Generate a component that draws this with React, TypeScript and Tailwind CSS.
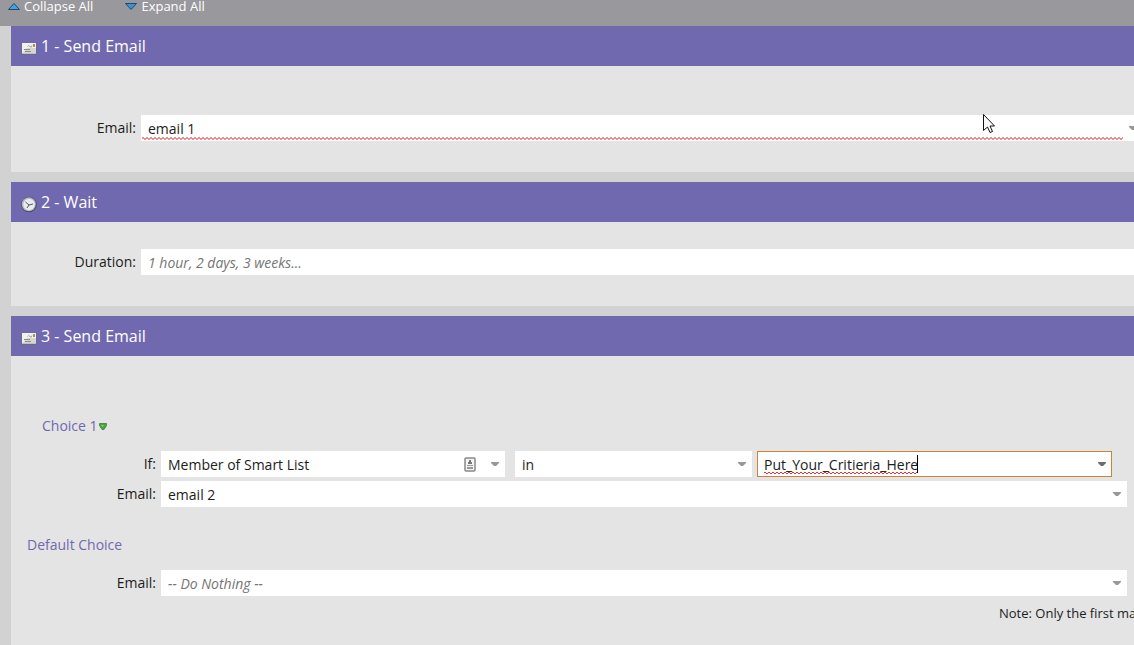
import type { ReactNode } from 'react';

const MailIcon = () => (
    <svg width="16" height="13" viewBox="0 0 16 13" className="shrink-0" aria-hidden="true">
        <rect x="0.5" y="1" width="15" height="11.5" rx="0.5" fill="#6b6878" />
        <rect x="1" y="1" width="14" height="10.500" fill="#f1f1ec" />
        <path d="M1 11.500L6 6h9v5.500z" fill="#d6d6d2" />
        <rect x="12" y="2" width="2" height="3" fill="#a8964c" />
        <path d="M6.500 4.500q1-2 2.500 0t2-1" fill="none" stroke="#a2a2a2" />
        <path d="M3 7.500h6M4 9.500h6" stroke="#8c8c8c" />
    </svg>
);

const ClockIcon = () => (
    <svg width="16" height="17" viewBox="0 0 16 17" className="shrink-0" aria-hidden="true">
        <circle cx="8" cy="8.500" r="7.800" fill="#4b4956" />
        <circle cx="7.800" cy="8.200" r="7" fill="#b4b7be" />
        <circle cx="8" cy="8.500" r="5.700" fill="#e9ecef" />
        <path d="M4.500 6l3.500 3 4-1M8 9l-2 3" fill="none" stroke="#55565c" />
    </svg>
);

const Arrow = ({ active = false }: { active?: boolean }) => (
    <svg
        width="8"
        height="4"
        viewBox="0 0 8 4"
        className={active ? 'block text-[#6c6c6c]' : 'block text-[#989898]'}
        aria-hidden="true"
    >
        <path d="M0 0h8v1L5 4H3L0 1z" fill="currentColor" />
    </svg>
);

const Step = ({ title, icon, children }: { title: string; icon: ReactNode; children: ReactNode }) => (
    <section className="bg-[#e4e4e4]">
        <h2 className="flex h-10 items-center gap-1 bg-[#7169af] pl-[10px] text-base text-white">
            <span className="pt-1">{icon}</span>
            {title}
        </h2>
        {children}
    </section>
);

const labelStyle = 'shrink-0 pr-[5px] pb-px text-right';
const fieldStyle = 'block h-[26px] w-full appearance-none bg-white pt-px pl-[7px] text-[#1c1c1c] outline-none';

const SelectField = ({ id, label, value, italic = false }: { id: string; label?: string; value: string; italic?: boolean }) => (
    <div className="relative w-full">
        <select
            id={id}
            aria-label={label}
            className={italic ? `${fieldStyle} italic text-[#757575]` : fieldStyle}
        >
            <option>{value}</option>
        </select>
        <span className="pointer-events-none absolute top-[11px] right-[6px]">
            <Arrow />
        </span>
    </div>
);

const App = () => {
    return (
        <div className="relative min-h-screen overflow-hidden bg-[#d2d2d2] font-['Open_Sans','Noto_Sans',sans-serif] text-sm text-[#1c1c1c]">
            <header className="flex h-[26px] items-start gap-8 bg-[#99989c] pl-2 text-[13px] leading-3 text-white">
                <button className="flex items-center gap-1">
                    <svg width="12" height="7" viewBox="0 0 12 7" aria-hidden="true">
                        <path d="M6 0.500L11.500 6.500H0.500z" fill="#4a9fd6" stroke="#174c78" />
                    </svg>
                    Collapse All
                </button>
                <button className="flex items-center gap-1">
                    <svg width="12" height="7" viewBox="0 0 12 7" aria-hidden="true">
                        <path d="M0.500 0.500H11.500L6 6.500z" fill="#3d93cf" stroke="#174c78" />
                    </svg>
                    Expand All
                </button>
            </header>

            <main className="flex flex-col gap-[10px] pl-[11px]">
                <Step title="1 - Send Email" icon={<MailIcon />}>
                    <div className="-mr-2 flex items-center pt-[49px] pb-[31px]">
                        <label htmlFor="email-1" className={`${labelStyle} w-[130px]`}>Email:</label>
                        <div className="relative grow">
                            <input id="email-1" type="text" defaultValue="email 1" spellCheck={false} className={fieldStyle} />
                            <svg height="3" className="pointer-events-none absolute bottom-px left-px w-[calc(100%-20px)]" aria-hidden="true">
                                <line x1="0" y1="0.5" x2="100%" y2="0.5" stroke="#f08c8c" strokeDasharray="2 2" />
                                <line x1="0" y1="1.5" x2="100%" y2="1.5" stroke="#f08c8c" />
                                <line x1="0" y1="2.5" x2="100%" y2="2.5" stroke="#f08c8c" strokeDasharray="2 2" strokeDashoffset="2" />
                            </svg>
                            <span className="pointer-events-none absolute top-[11px] right-[5px]">
                                <Arrow />
                            </span>
                        </div>
                    </div>
                </Step>

                <Step title="2 - Wait" icon={<ClockIcon />}>
                    <div className="flex items-center pt-[27px] pb-[31px]">
                        <label htmlFor="duration" className={`${labelStyle} w-[130px]`}>Duration:</label>
                        <div className="grow">
                            <input
                                id="duration"
                                type="text"
                                placeholder="1 hour, 2 days, 3 weeks..."
                                className={`${fieldStyle} placeholder:italic placeholder:text-[#757575]`}
                            />
                        </div>
                    </div>
                </Step>

                <Step title="3 - Send Email" icon={<MailIcon />}>
                    <div className="pt-[60px] pr-[7px] pb-6">
                        <button className="ml-[31px] flex h-5 items-center gap-px text-[#7169af]">
                            Choice 1
                            <svg width="8" height="7" viewBox="0 0 8 7" aria-hidden="true">
                                <path d="M0.500 0.500h7v2L5 6.500H3L0.500 2.500z" fill="#4ba341" stroke="#4a8f42" />
                                <path d="M2 2h3L3.500 4z" fill="#8bc980" />
                            </svg>
                        </button>

                        <div className="mt-[15px] flex items-center pr-[15px]">
                            <label htmlFor="filter" className={`${labelStyle} w-[150px]`}>If:</label>
                            <div className="relative grow-[344] basis-0">
                                <SelectField id="filter" value="Member of Smart List" />
                                <svg
                                    width="12"
                                    height="15"
                                    viewBox="0 0 12 15"
                                    className="pointer-events-none absolute top-[6px] right-[29px]"
                                    aria-hidden="true"
                                >
                                    <rect x="1" y="1" width="10" height="13" rx="1" fill="#f4f4f4" stroke="#888" strokeWidth="1.500" />
                                    <path d="M5 3h2v2h1v2H4V5h1z" fill="#777" />
                                    <path d="M3 8h6v1H3zM3 10h6v2H3z" fill="#999" />
                                </svg>
                            </div>
                            <div className="ml-[10px] grow-[237] basis-0">
                                <SelectField id="operator" label="Operator" value="in" />
                            </div>
                            <div className="relative ml-[5px] grow-[355] basis-0">
                                <input
                                    type="text"
                                    aria-label="Smart list"
                                    defaultValue="Put_Your_Critieria_Here"
                                    spellCheck={false}
                                    className="block h-[26px] w-full border border-[#cb8338] bg-white pt-px pl-[6px] text-[#1c1c1c] outline-none"
                                />
                                <svg width="153" height="2" className="pointer-events-none absolute bottom-[3px] left-[7px]" aria-hidden="true">
                                    <line x1="0" y1="0.5" x2="153" y2="0.5" stroke="#e03030" strokeDasharray="2 2" />
                                    <line x1="0" y1="1.5" x2="153" y2="1.5" stroke="#e03030" strokeDasharray="2 2" strokeDashoffset="2" />
                                </svg>
                                <span className="absolute top-1 left-[160px] h-[18px] w-px bg-black" />
                                <span className="pointer-events-none absolute top-[11px] right-[6px]">
                                    <Arrow active />
                                </span>
                            </div>
                        </div>

                        <div className="mt-1 flex items-center">
                            <label htmlFor="email-2" className={`${labelStyle} w-[150px]`}>Email:</label>
                            <SelectField id="email-2" value="email 2" />
                        </div>

                        <h3 className="mt-7 ml-4 text-[#7169af]">Default Choice</h3>
                        <div className="mt-[15px] flex items-center">
                            <label htmlFor="default-email" className={`${labelStyle} w-[150px]`}>Email:</label>
                            <SelectField id="default-email" value="-- Do Nothing --" italic />
                        </div>
                        <div className="mt-2 flex justify-end">
                            <p className="w-[128px] text-[13px] whitespace-nowrap">Note: Only the first matching choice</p>
                        </div>
                    </div>
                </Step>
            </main>

            <svg
                width="13"
                height="20"
                viewBox="0 0 13 20"
                className="pointer-events-none absolute top-[114px] left-[983px]"
                aria-hidden="true"
            >
                <path d="M0.500 0.500V16.500L4.500 13L7 18.500L9.500 17.500L7 12H11.500z" fill="#fff" stroke="#111" />
            </svg>
        </div>
    );
};

export default App;
